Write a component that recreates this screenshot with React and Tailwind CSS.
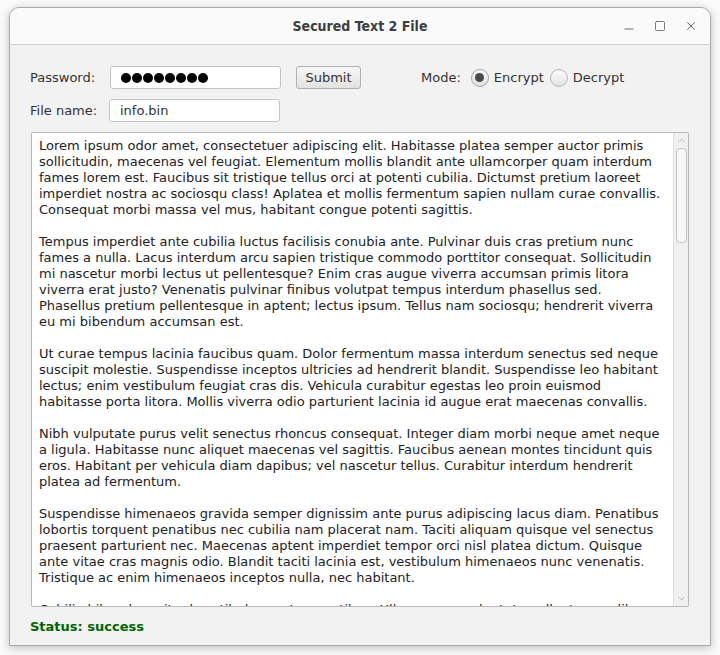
import { Minus, Square, X, ChevronUp, ChevronDown } from "lucide-react";

const lines = [
  "Lorem ipsum odor amet, consectetuer adipiscing elit. Habitasse platea semper auctor primis",
  "sollicitudin, maecenas vel feugiat. Elementum mollis blandit ante ullamcorper quam interdum",
  "fames lorem est. Faucibus sit tristique tellus orci at potenti cubilia. Dictumst pretium laoreet",
  "imperdiet nostra ac sociosqu class! Aplatea et mollis fermentum sapien nullam curae convallis.",
  "Consequat morbi massa vel mus, habitant congue potenti sagittis.",
  "",
  "Tempus imperdiet ante cubilia luctus facilisis conubia ante. Pulvinar duis cras pretium nunc",
  "fames a nulla. Lacus interdum arcu sapien tristique commodo porttitor consequat. Sollicitudin",
  "mi nascetur morbi lectus ut pellentesque? Enim cras augue viverra accumsan primis litora",
  "viverra erat justo? Venenatis pulvinar finibus volutpat tempus interdum phasellus sed.",
  "Phasellus pretium pellentesque in aptent; lectus ipsum. Tellus nam sociosqu; hendrerit viverra",
  "eu mi bibendum accumsan est.",
  "",
  "Ut curae tempus lacinia faucibus quam. Dolor fermentum massa interdum senectus sed neque",
  "suscipit molestie. Suspendisse inceptos ultricies ad hendrerit blandit. Suspendisse leo habitant",
  "lectus; enim vestibulum feugiat cras dis. Vehicula curabitur egestas leo proin euismod",
  "habitasse porta litora. Mollis viverra odio parturient lacinia id augue erat maecenas convallis.",
  "",
  "Nibh vulputate purus velit senectus rhoncus consequat. Integer diam morbi neque amet neque",
  "a ligula. Habitasse nunc aliquet maecenas vel sagittis. Faucibus aenean montes tincidunt quis",
  "eros. Habitant per vehicula diam dapibus; vel nascetur tellus. Curabitur interdum hendrerit",
  "platea ad fermentum.",
  "",
  "Suspendisse himenaeos gravida semper dignissim ante purus adipiscing lacus diam. Penatibus",
  "lobortis torquent penatibus nec cubilia nam placerat nam. Taciti aliquam quisque vel senectus",
  "praesent parturient nec. Maecenas aptent imperdiet tempor orci nisl platea dictum. Quisque",
  "ante vitae cras magnis odio. Blandit taciti lacinia est, vestibulum himenaeos nunc venenatis.",
  "Tristique ac enim himenaeos inceptos nulla, nec habitant.",
  "",
  "Cubilia bibendum sit ad vestibulum ante penatibus. Ullamcorper vulputate pellentesque libero",
];

export default function App() {
  const font = "font-['DejaVu_Sans',sans-serif]";
  const inputCls = "h-[23px] bg-white border border-[#c4c4c4] rounded-[3px] flex items-center px-[10px] text-[13px] text-[#333]";

  return (
    <div className={`w-[720px] h-[655px] bg-[#fbfbfb] pt-[7px] pl-[9px] ${font}`}>
      <div className="w-[702px] h-[639px] rounded-t-[10px] border border-[#a8a8a8] shadow-[0_2px_10px_rgba(0,0,0,0.25)] bg-[#f2f2f2] flex flex-col overflow-hidden">
        {/* title bar */}
        <div className="h-[37px] shrink-0 bg-[#fafafa] border-b border-[#d0d0d0] flex items-center relative">
          <div className="w-full text-center text-[14px] font-bold text-[#3d3d3d] font-['DejaVu_Sans_Condensed','DejaVu_Sans',sans-serif] pt-[1px]">
            Secured Text 2 File
          </div>
          <div className="absolute right-[12px] top-0 h-full flex items-center gap-[18px] text-[#3d3d3d]">
            <Minus size={14} strokeWidth={1.3} className="mt-[6px]" />
            <Square size={12} strokeWidth={1.3} />
            <X size={14} strokeWidth={1.3} />
          </div>
        </div>

        {/* form */}
        <div className="pl-[20px] pr-[20px] pt-[21px] flex flex-col gap-[10px]">
          <div className="flex items-center h-[23px]">
            <span className="w-[80px] text-[13px] text-[#333]">Password:</span>
            <div className={`${inputCls} w-[171px] gap-[1px]`}>
              {Array.from({ length: 8 }).map((_, i) => (
                <span key={i} className="w-[10px] h-[10px] rounded-full bg-black" />
              ))}
            </div>
            <button className="ml-[15px] w-[65px] h-[23px] rounded-[3px] border border-[#b0b0b0] bg-gradient-to-b from-[#f6f6f6] to-[#e2e2e2] text-[13px] text-[#333]">
              Submit
            </button>
            <span className="ml-[60px] text-[13px] text-[#333]">Mode:</span>
            <div className="ml-[10px] w-[18px] h-[18px] rounded-full border border-[#a6a6a6] bg-gradient-to-b from-[#fafafa] to-[#e0e0e0] flex items-center justify-center">
              <span className="w-[9px] h-[9px] rounded-full bg-[#4a4a4a]" />
            </div>
            <span className="ml-[5px] text-[13px] text-[#333]">Encrypt</span>
            <div className="ml-[6px] w-[18px] h-[18px] rounded-full border border-[#b8b8b8] bg-gradient-to-b from-[#fafafa] to-[#e4e4e4]" />
            <span className="ml-[5px] text-[13px] text-[#333]">Decrypt</span>
          </div>
          <div className="flex items-center h-[23px]">
            <span className="w-[79px] text-[13px] text-[#333]">File name:</span>
            <div className={`${inputCls} w-[171px]`}>info.bin</div>
          </div>
        </div>

        {/* text area */}
        <div className="mt-[10px] ml-[21px] w-[658px] h-[475px] bg-white border border-[#b8b8b8] rounded-[2px] flex overflow-hidden">
          <div className="flex-1 pl-[7px] pt-[5px] text-[13px] leading-[16px] text-[#222] overflow-hidden">
            {lines.map((l, i) => (
              <div key={i} className="h-[16px] whitespace-pre">{l}</div>
            ))}
          </div>
          <div className="w-[15px] bg-[#f0f0f0] border-l border-[#e0e0e0] flex flex-col items-center">
            <ChevronUp size={11} strokeWidth={1.3} className="text-[#8a8a8a] mt-[2px]" />
            <div className="mt-[2px] w-[11px] h-[95px] rounded-[4px] border border-[#c4c4c4] bg-[#f7f7f7]" />
            <div className="flex-1" />
            <ChevronDown size={11} strokeWidth={1.3} className="text-[#8a8a8a] mb-[2px]" />
          </div>
        </div>

        {/* status */}
        <div className="pl-[20px] mt-[10px] text-[13px] font-bold text-[#006400]">Status: success</div>
      </div>
    </div>
  );
}
